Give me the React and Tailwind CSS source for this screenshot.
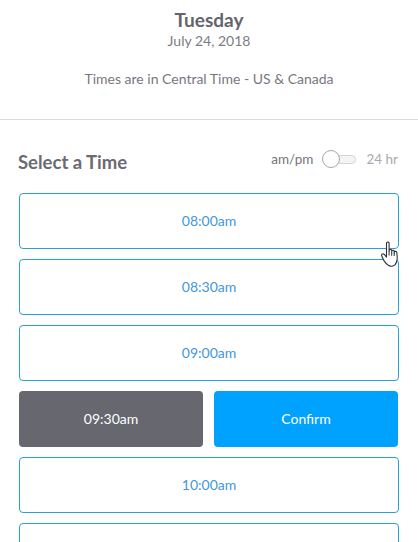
import React from 'react';

const font = { fontFamily: 'Lato, sans-serif' };

function HandCursor() {
  return (
    <svg
      className="absolute left-[381px] top-[241px]"
      width="19"
      height="26"
      viewBox="0 0 19 26"
    >
      <path
        d="M5.5 2c0-1.3 2.6-1.3 2.6 0v8.5l.1-1.2c0-1.1 2.5-1.1 2.5 0v2l.1-1.3c.1-1 2.4-1 2.4.1v2l.2-1c.2-1 2.3-.9 2.4.2l.4 4.5c.2 2.7-.4 5.400-1.800 7.600c-1.600 1.800-4.500 2.100-6.800 1c-2-1-3.300-2.700-4.500-4.500L.9 15.300c-.6-1-.3-2 .6-2.300c1-.4 2 .3 2.500 1.100l1.500 2z"
        fill="#fff"
        stroke="#2f2f2f"
        strokeWidth="1.100"
        strokeLinejoin="round"
      />
      <path d="M8.100 10.500v4M10.700 11.300v3.500M13.200 12v3" fill="none" stroke="#2f2f2f" strokeWidth="1" />
    </svg>
  );
}

function TimeButton({ label }) {
  return (
    <button className="h-14 w-full shrink-0 rounded-[4px] border border-[#2a9fe0] bg-white pb-[2px] text-[14px] text-[#3f97dd]">
      {label}
    </button>
  );
}

export default function App() {
  return (
    <div className="relative h-[542px] w-[418px] overflow-hidden bg-white" style={font}>
      {/* Header */}
      <div className="flex h-[120px] flex-col items-center border-b border-[#dcdcdc] pt-[9px] text-center">
        <h1 className="text-[19px] leading-[22px] font-bold text-[#63646c]">Tuesday</h1>
        <p className="text-[14px] leading-[20px] text-[#7b7c83]">July 24, 2018</p>
        <p className="mt-[18px] text-[14px] leading-[20px] text-[#77787f]">
          Times are in Central Time - US &amp; Canada
        </p>
      </div>

      {/* Title row */}
      <div className="flex h-[73px] items-start justify-between pl-[18px] pr-[20px]">
        <h2 className="mt-[30px] text-[18.500px] leading-[24px] font-bold text-[#696a72]">Select a Time</h2>
        <div className="mt-[29px] flex items-center text-[13.500px] leading-[20px]">
          <span className="text-[#74757c]">am/pm</span>
          <div className="relative ml-[9px] flex h-[18px] w-[34px] items-center">
            <div className="ml-[8px] h-[9px] w-[26px] rounded-full border border-[#d5d5d5] bg-[#f4f4f4]" />
            <div className="absolute top-0 left-0 h-[18px] w-[18px] rounded-full border border-[#a8a8a8] bg-white" />
          </div>
          <span className="ml-[10px] text-[#a9aaaf]">24 hr</span>
        </div>
      </div>

      {/* Times */}
      <div className="flex flex-col gap-[10px] px-[19px]">
        <TimeButton label="08:00am" />
        <TimeButton label="08:30am" />
        <TimeButton label="09:00am" />
        <div className="flex h-14 shrink-0 gap-[11px] pr-[1px]">
          <button className="flex-1 rounded-[4px] bg-[#66676f] pb-[2px] text-[14px] text-white">09:30am</button>
          <button className="flex-1 rounded-[4px] bg-[#00a2ff] pb-[2px] text-[14px] text-white">Confirm</button>
        </div>
        <TimeButton label="10:00am" />
        <TimeButton />
      </div>

      <HandCursor />
    </div>
  );
}
